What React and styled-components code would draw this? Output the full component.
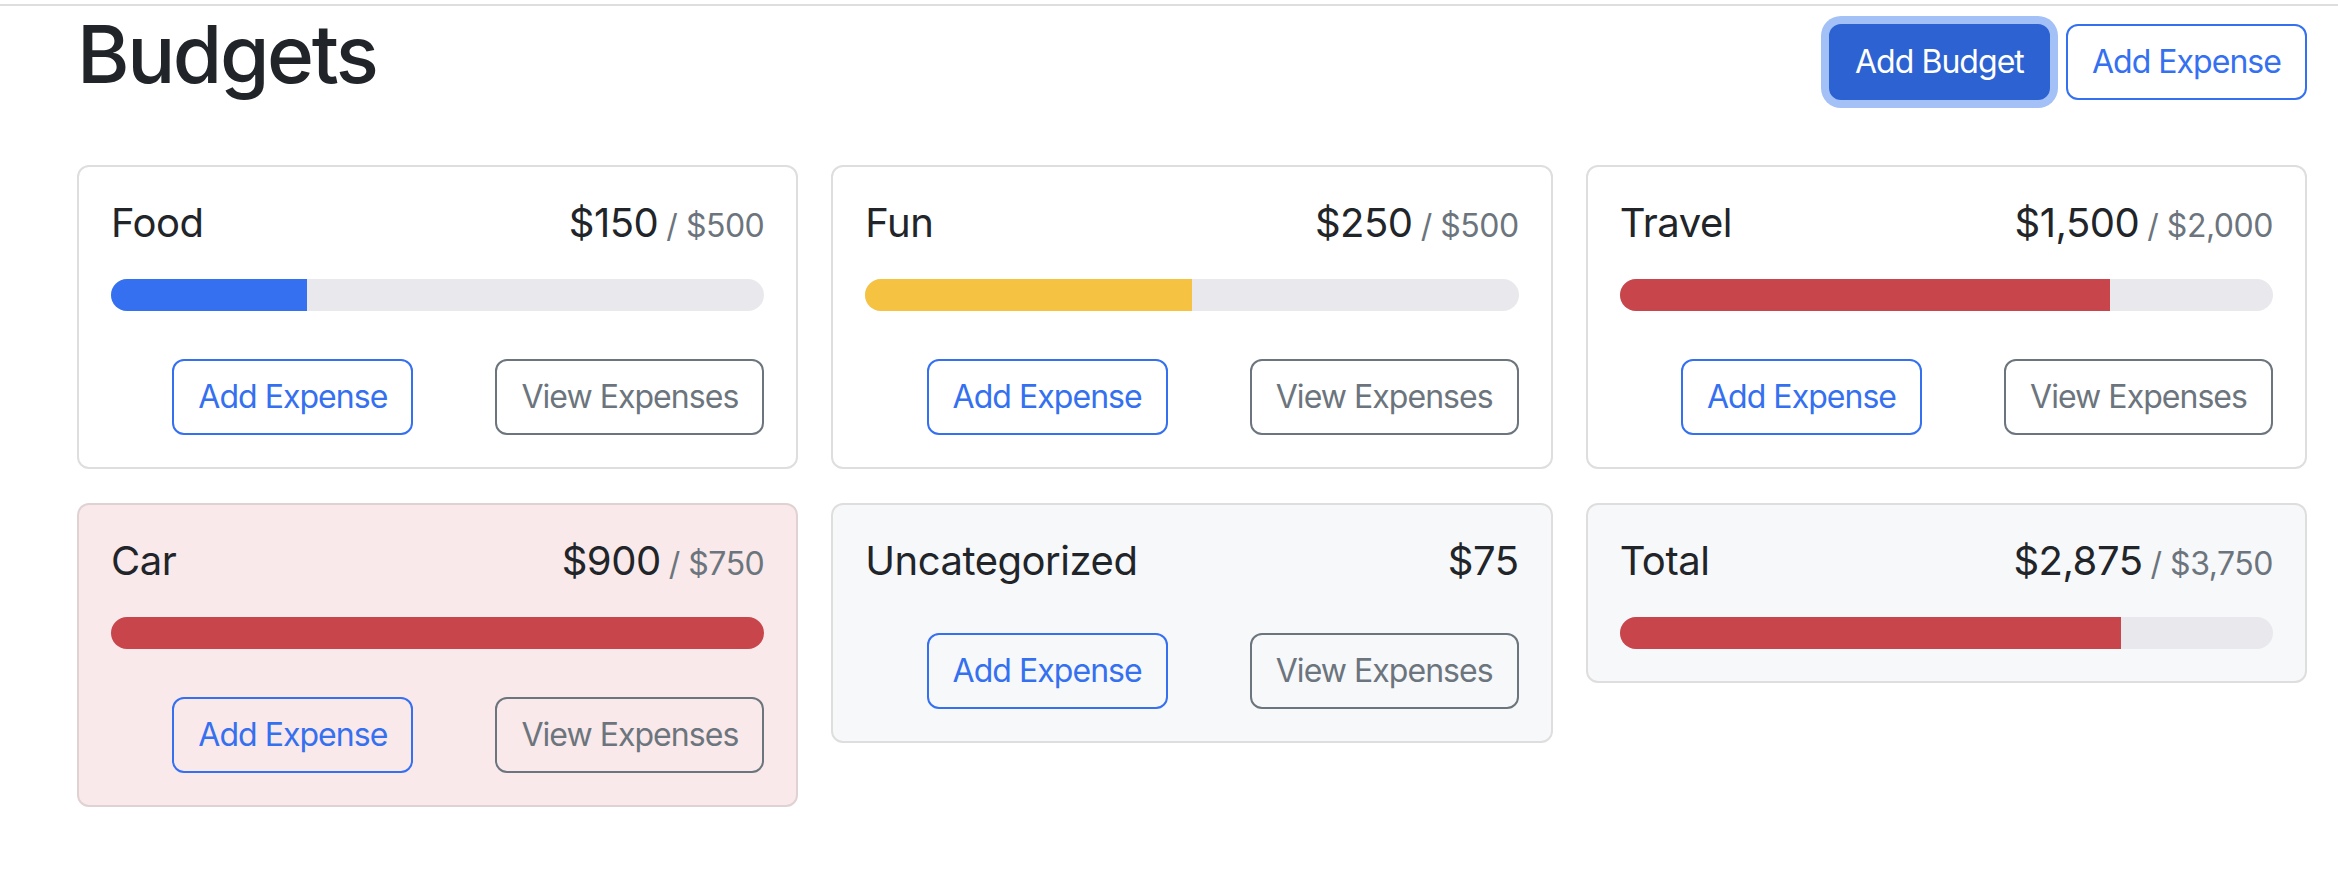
import React from 'react';
import styled, {createGlobalStyle, css} from 'styled-components';

const GlobalStyle = createGlobalStyle`
  body {
    margin: 0;
    background: #ffffff;
    color: #212529;
    font-family: Inter, "Liberation Sans", sans-serif;
    letter-spacing: -0.03em;
  }
`;

const PageSt = styled.div`
  padding-top: 4px;
`;

const FrameSt = styled.div`
  border-top: 2px solid #dedede;
  padding: 0 31px 60px 77px;
`;

const HeaderSt = styled.div`
  display: flex;
  align-items: center;
  gap: 16px;
  margin-bottom: 47px;
`;

const TitleSt = styled.h1`
  margin: 0 auto 16px 0;
  font-family: Inter, "Liberation Sans", sans-serif;
  font-size: 80px;
  font-weight: 500;
  letter-spacing: -0.03em;
  line-height: 1.2;
  color: #212529;
`;

const variants = {
  primary: css`
    background: #2c62d1;
    border-color: #2c62d1;
    color: #ffffff;
    box-shadow: 0 0 0 8px #a3c0f7;
  `,
  outlinePrimary: css`
    background: transparent;
    border-color: #3470f0;
    color: #3470f0;
  `,
  outlineSecondary: css`
    background: transparent;
    border-color: #6c757d;
    color: #6c757d;
  `,
};

const ButtonSt = styled.button`
  font-family: Inter, "Liberation Sans", sans-serif;
  font-size: 32px;
  font-weight: 400;
  letter-spacing: -0.03em;
  line-height: 1.5;
  padding: 12px 24px;
  border: 2px solid;
  border-radius: 12px;
  cursor: pointer;
  white-space: nowrap;
  ${p => variants[p.$variant]}
`;

const GridSt = styled.div`
  display: grid;
  grid-template-columns: repeat(3, 1fr);
  gap: 34px 33px;
  align-items: start;
`;

const CardSt = styled.div`
  border: 2px solid ${p => (p.$tone === 'danger' ? '#e0d2d3' : '#dedede')};
  border-radius: 12px;
  padding: 32px;
  background: ${p =>
    p.$tone === 'danger' ? '#f9e9ea' : p.$tone === 'light' ? '#f7f8fa' : '#ffffff'};
`;

const CardTitleSt = styled.div`
  display: flex;
  justify-content: space-between;
  align-items: baseline;
  font-size: 40px;
  line-height: 1.2;
`;

const AmountSt = styled.div`
  display: flex;
  align-items: baseline;
`;

const MaxSt = styled.span`
  color: #6c757d;
  font-size: 32px;
  margin-left: 8px;
`;

const ProgressSt = styled.div`
  margin-top: 32px;
  height: 32px;
  border-radius: 999px;
  background: #e9e9ed;
  overflow: hidden;
`;

const FillSt = styled.div`
  height: 100%;
  background: ${p => p.$color};
`;

const ActionsSt = styled.div`
  display: flex;
  justify-content: flex-end;
  gap: 82px;
  margin-top: 48px;
`;

const budgets = [
  {name: 'Food', amount: 150, max: 500},
  {name: 'Fun', amount: 250, max: 500},
  {name: 'Travel', amount: 1500, max: 2000},
  {name: 'Car', amount: 900, max: 750},
  {name: 'Uncategorized', amount: 75, tone: 'light'},
  {name: 'Total', amount: 2875, max: 3750, tone: 'light', hideButtons: true},
];

const money = n => '$' + n.toLocaleString('en-US');

// same thresholds as the progress variants: primary, warning, danger
const barColor = ratio =>
  ratio < 0.5 ? '#3470f0' : ratio < 0.75 ? '#f5c242' : '#c8454c';

function BudgetCard({name, amount, max, tone, hideButtons}) {
  const ratio = max ? amount / max : 0;
  const cardTone = tone || (max && amount > max ? 'danger' : 'white');
  return (
    <CardSt $tone={cardTone}>
      <CardTitleSt>
        <div>{name}</div>
        <AmountSt>
          {money(amount)}
          {max && <MaxSt>/ {money(max)}</MaxSt>}
        </AmountSt>
      </CardTitleSt>
      {max && (
        <ProgressSt>
          <FillSt
            $color={barColor(ratio)}
            style={{width: `${Math.min(ratio, 1) * 100}%`}}
          />
        </ProgressSt>
      )}
      {!hideButtons && (
        <ActionsSt>
          <ButtonSt $variant="outlinePrimary">Add Expense</ButtonSt>
          <ButtonSt $variant="outlineSecondary">View Expenses</ButtonSt>
        </ActionsSt>
      )}
    </CardSt>
  );
}

export default function App() {
  return (
    <PageSt>
      <GlobalStyle />
      <FrameSt>
        <HeaderSt>
          <TitleSt>Budgets</TitleSt>
          <ButtonSt $variant="primary">Add Budget</ButtonSt>
          <ButtonSt $variant="outlinePrimary">Add Expense</ButtonSt>
        </HeaderSt>
        <GridSt>
          {budgets.map(b => (
            <BudgetCard key={b.name} {...b} />
          ))}
        </GridSt>
      </FrameSt>
    </PageSt>
  );
}
